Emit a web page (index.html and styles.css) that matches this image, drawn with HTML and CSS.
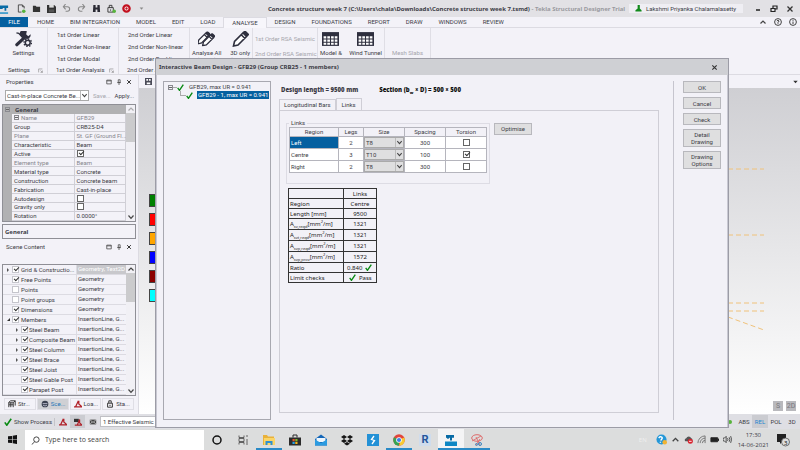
FILE: index.html
```html
<!DOCTYPE html>
<html lang="en">
<head>
<meta charset="UTF-8">
<meta name="viewport" content="width=device-width, initial-scale=1.0">
<title>Tekla Structural Designer</title>
<link rel="stylesheet" href="styles.css">
</head>
<body>
<svg width="0" height="0" class="defs">
  <symbol id="tick" viewBox="0 0 10 10"><path d="M1 5.500 3.500 9 9 1" fill="none" stroke="#0a8a14" stroke-width="2"/></symbol>
  <symbol id="pencil" viewBox="0 0 16 16"><path d="M1 15l1-4.500L10.500 2l3.500 3.500L5.500 14zM9 4l3.500 3.500M11.500 1l1-.8 3.300 3.300-1 1z" fill="#fff" stroke="#2e2f3e" stroke-width="1.600"/></symbol>
  <symbol id="grid" viewBox="0 0 16 13"><path d="M0 0h16v13H0z" fill="#2e2f3e"/><path d="M1.500 4h2.500v2H1.500zM5 4h2.500v2H5zM8.500 4H11v2H8.500zM12 4h2.500v2H12zM1.500 7h2.500v2H1.500zM5 7h2.500v2H5zM8.500 7H11v2H8.500zM12 7h2.500v2H12zM1.500 10h2.500v2H1.500zM5 10h2.500v2H5zM8.500 10H11v2H8.500zM12 10h2.500v2H12z" fill="#fff"/></symbol>
  <symbol id="close" viewBox="0 0 8 8"><path d="M1.500 1.500l5 5m0-5l-5 5" stroke="#333" stroke-width="1.300"/></symbol>
  <symbol id="box" viewBox="0 0 8 8"><path d="M1 1.500h6v5H1zM1 2.500h6" fill="none" stroke="#444"/></symbol>
  <symbol id="pin" viewBox="0 0 8 8"><path d="M3 1h2.500v3.500H3zM1.500 4.800h5M4 5v3" fill="none" stroke="#444"/></symbol>
  <symbol id="up" viewBox="0 0 8 8"><path d="M1.500 5.500 4 3l2.500 2.500" fill="none" stroke="#444" stroke-width="1.200"/></symbol>
  <symbol id="down" viewBox="0 0 8 8"><path d="M1.500 2.500 4 5.300l2.500-2.800" fill="none" stroke="#444" stroke-width="1.200"/></symbol>
  <symbol id="launch" viewBox="0 0 8 8"><path d="M1 7V1.500h6M4 4l3 3M7 4v3H4" fill="none" stroke="#888"/></symbol>
  <symbol id="load" viewBox="0 0 10 10"><path d="M0 8.500h10L6 5V1M5.500 1 2 8.500" fill="none" stroke="#b02028" stroke-width="1.600"/></symbol>
</svg>

<div class="app">
  <header class="titlebar">
    <div class="quick">
      <svg class="logo" viewBox="0 0 10 12"><path d="M0 10.500h9" stroke="#0f87c4" stroke-width="1.500"/><path d="M0 2h9v3H7v3H5V5H3v1H0z" fill="#086ba5"/></svg>
      <svg viewBox="0 0 10 10"><path d="M6 1H1.500v8H5M6 1l2 2v2M6 1v2h2" fill="none" stroke="#444"/><circle cx="7.500" cy="8" r="2" fill="#57b33c"/></svg>
      <svg viewBox="0 0 10 10"><path d="M1 2h3l1 1h4v6H1z" fill="#333"/></svg>
      <svg viewBox="0 0 10 10"><path d="M0 1h8l2 2v7H0z" fill="#333"/><path d="M2.500 1h5v3h-5z" fill="#ddd"/><path d="M2 6h6v3H2z" fill="#555"/></svg>
      <svg viewBox="0 0 10 10"><path d="M2 3h4a2.500 2.500 0 010 5H4M4 0 1.500 3 4 6" fill="none" stroke="#888" stroke-width="1.200"/></svg>
      <svg viewBox="0 0 10 10"><path d="M8 3H4a2.500 2.500 0 000 5h2M6 0l2.500 3L6 6" fill="none" stroke="#888" stroke-width="1.200"/></svg>
      <svg viewBox="0 0 10 10"><path d="M1.500 1h2.500v3h2V1h2.500L9 9H6V6H4v3H1z" fill="#2b2b35"/></svg>
      <svg viewBox="0 0 10 10"><path d="M1 4h6v5H1zM2.500 4V1.500h3V4M4 6v1.500" fill="none" stroke="#333"/><circle cx="8" cy="8" r="2" fill="#57b33c"/></svg>
      <svg viewBox="0 0 10 10"><circle cx="5" cy="5" r="3.500" fill="#fff" stroke="#c2101e" stroke-width="2.500"/><circle cx="5" cy="5" r="1.300" fill="#c2101e"/></svg>
      <svg viewBox="0 0 10 10"><path d="M3 4h4L5 6.500z" fill="#888"/></svg>
    </div>
    <h1 class="doc-title">Concrete structure week 7 (C:\Users\chala\Downloads\Concrete structure week 7.tsmd) <span>- Tekla Structural Designer Trial</span></h1>
    <div class="user"><svg viewBox="0 0 8 8"><path d="M3 0h2.500v4L7.500 6v1.500H.5V6L3 4z" fill="#128a1c"/></svg>Lakshmi Priyanka Chalamalasetty</div>
    <div class="win">
      <svg viewBox="0 0 8 8"><path d="M2 5h4" stroke="#222" stroke-width="1.500"/></svg>
      <svg viewBox="0 0 8 8"><path d="M3 3V1h4v3H5M1 3.500h4v3H1z" fill="none" stroke="#222" stroke-width="1.200"/></svg>
      <svg><use href="#close"/></svg>
    </div>
  </header>

  <nav class="menu">
    <button class="file">FILE</button>
    <button>HOME</button>
    <button>BIM INTEGRATION</button>
    <button>MODEL</button>
    <button>EDIT</button>
    <button>LOAD</button>
    <button class="active">ANALYSE</button>
    <button>DESIGN</button>
    <button>FOUNDATIONS</button>
    <button>REPORT</button>
    <button>DRAW</button>
    <button>WINDOWS</button>
    <button>REVIEW</button>
    <div class="help">
      <svg><use href="#up"/></svg>
      <svg viewBox="0 0 8 8"><circle cx="4" cy="4" r="3.400" fill="none" stroke="#444"/><path d="M2.800 3q1.200-1.500 2.300 0L4 4.500V5.800" fill="none" stroke="#444"/></svg>
      <svg viewBox="0 0 8 8"><circle cx="4" cy="4" r="3.400" fill="none" stroke="#444"/><path d="M4 3.500V6M4 1.800v1" stroke="#444"/></svg>
    </div>
  </nav>

  <section class="ribbon">
    <div class="group g-settings">
      <div class="tools"><button class="tool"><svg viewBox="0 0 18 17"><path d="M2 14.500 10 7" stroke="#2e2f3e" stroke-width="3.500" stroke-linecap="round"/><path d="M12.500.5A4 4 0 108 6.500l3 1.500a4 4 0 005.500-4.500L14 5.500 11.800 3.500z" fill="#2e2f3e"/><path d="M1.500 2 4 2.500 8.500 7.500" fill="none" stroke="#2e2f3e" stroke-width="1.500"/><circle cx="13.500" cy="12.500" r="4" fill="none" stroke="#2e2f3e" stroke-width="1.500" stroke-dasharray="1.500 1.600"/><circle cx="13.500" cy="12.500" r="2.600" fill="#f3f2f8" stroke="#2e2f3e" stroke-width="1.600"/></svg>Settings</button></div>
      <footer>Settings <svg><use href="#launch"/></svg></footer>
    </div>
    <div class="group g-first">
      <div class="links"><button>1st Order Linear</button><button>1st Order Non-linear</button><button>1st Order Modal</button></div>
      <footer>1st Order Analysis <svg><use href="#launch"/></svg></footer>
    </div>
    <div class="group g-first">
      <div class="links"><button>2nd Order Linear</button><button>2nd Order Non-linear</button><button>2nd Order Buckling</button></div>
      <footer>2nd Order Analysis <svg><use href="#launch"/></svg></footer>
    </div>
    <div class="group g-static">
      <div class="tools">
        <button class="tool"><svg viewBox="0 0 18 16"><use href="#pencil" x="-1" width="14" height="14"/><use href="#pencil" x="4" y="2" width="14" height="14"/></svg>Analyse All<br>(Static)</button>
        <button class="tool"><svg><use href="#pencil"/></svg>3D only<br>(Static)</button>
      </div>
    </div>
    <div class="group g-rsa">
      <div class="links dim"><button disabled>1st Order RSA Seismic</button><button disabled>2nd Order RSA Seismic</button></div>
    </div>
    <div class="group g-model">
      <div class="tools">
        <button class="tool"><svg><use href="#grid"/></svg>Model &amp;<br>Results</button>
        <button class="tool"><svg><use href="#grid"/></svg>Wind Tunnel</button>
      </div>
    </div>
    <div class="group g-mesh"><button disabled>Mesh Slabs</button></div>
  </section>

  <main class="work">
    <aside class="side">
      <div class="panel-head"><h2>Properties</h2><svg><use href="#box"/></svg><svg><use href="#pin"/></svg><svg><use href="#close"/></svg></div>
      <div class="preset">
        <span class="combo"><select aria-label="Property set"><option>Cast-in-place Concrete Be...</option></select><svg><use href="#down"/></svg></span>
        <button disabled>Save...</button><button>Apply...</button>
      </div>
      <div class="props">
        <div class="cat"><i class="minus"></i>General</div>
        <div class="props-body">
          <table>
            <tr class="off"><td><i class="plus"></i>Name</td><td>GFB29</td></tr>
            <tr><td>Group</td><td>CRB25-D4</td></tr>
            <tr class="off"><td>Plane</td><td>St. GF (Ground Fl...</td></tr>
            <tr><td>Characteristic</td><td>Beam</td></tr>
            <tr><td><label for="p-active">Active</label></td><td><input type="checkbox" id="p-active" checked></td></tr>
            <tr class="off"><td>Element type</td><td>Beam</td></tr>
            <tr><td>Material type</td><td>Concrete</td></tr>
            <tr><td>Construction</td><td>Concrete beam</td></tr>
            <tr><td>Fabrication</td><td>Cast-in-place</td></tr>
            <tr><td><label for="p-auto">Autodesign</label></td><td><input type="checkbox" id="p-auto"></td></tr>
            <tr><td><label for="p-grav">Gravity only</label></td><td><input type="checkbox" id="p-grav"></td></tr>
            <tr><td>Rotation</td><td>0.0000°</td></tr>
          </table>
        </div>
        <div class="scroll"><svg class="faint"><use href="#up"/></svg><div class="thumb"></div><svg><use href="#down"/></svg></div>
      </div>
      <div class="hint">General</div>

      <div class="panel-head scene-head"><h2>Scene Content</h2><svg><use href="#box"/></svg><svg><use href="#pin"/></svg><svg><use href="#close"/></svg></div>
      <div class="scene">
        <ul>
          <li class="picked"><span><i class="arrow"></i><label><input type="checkbox" checked>Grid &amp; Constructio...</label></span><em>Geometry, Text2D</em></li>
          <li><span><i></i><label><input type="checkbox" checked>Free Points</label></span><em>Geometry</em></li>
          <li><span><i></i><label><input type="checkbox">Points</label></span><em>Geometry</em></li>
          <li><span><i></i><label><input type="checkbox">Point groups</label></span><em>Geometry</em></li>
          <li><span><i></i><label><input type="checkbox" checked>Dimensions</label></span><em>Geometry</em></li>
          <li><span><i class="arrow open"></i><label><input type="checkbox" checked>Members</label></span><em>InsertionLine, G...</em></li>
          <li class="sub"><span><i class="arrow"></i><label><input type="checkbox" checked>Steel Beam</label></span><em>InsertionLine, G...</em></li>
          <li class="sub"><span><i class="arrow"></i><label><input type="checkbox" checked>Composite Beam</label></span><em>InsertionLine, G...</em></li>
          <li class="sub"><span><i class="arrow"></i><label><input type="checkbox" checked>Steel Column</label></span><em>InsertionLine, G...</em></li>
          <li class="sub"><span><i class="arrow"></i><label><input type="checkbox" checked>Steel Brace</label></span><em>InsertionLine, G...</em></li>
          <li class="sub"><span><i></i><label><input type="checkbox" checked>Steel Joist</label></span><em>InsertionLine, G...</em></li>
          <li class="sub"><span><i></i><label><input type="checkbox" checked>Steel Gable Post</label></span><em>InsertionLine, G...</em></li>
          <li class="sub"><span><i></i><label><input type="checkbox" checked>Parapet Post</label></span><em>InsertionLine, G...</em></li>
        </ul>
        <div class="scroll"><svg><use href="#up"/></svg><div class="thumb"></div><svg><use href="#down"/></svg></div>
      </div>
      <div class="side-tabs">
        <button><svg viewBox="0 0 10 10"><path d="M1 9V3l2-2h6v6M1 3.500h5.500V9M3.500 3v6M6.500 3.500 9 1M1 6h5.500" fill="none" stroke="#333" stroke-width="1.200"/></svg>Str...</button>
        <button class="active"><svg viewBox="0 0 10 10"><circle cx="5" cy="5" r="4.200" fill="#3b4150"/><path d="M2 4.500h6M2.500 6.500l2.500 1 2.500-1" stroke="#ccd" fill="none"/></svg>Sce...</button>
        <button><svg><use href="#load"/></svg>Loa...</button>
        <button><svg viewBox="0 0 10 10"><path d="M2 4h6v5H2zM3.500 4V1h3v3M5 6v1.500" fill="none" stroke="#333" stroke-width="1.200"/></svg>Sta...</button>
      </div>
    </aside>

    <section class="view">
      <div class="view-tabs"><svg viewBox="0 0 8 8"><path d="M0 0h8v8H0z" fill="#4a4b58"/><path d="M1.500 1h2v2h-2zM4.500 1h2v2h-2zM2 5h4v2H2z" fill="#fff"/></svg><svg viewBox="0 0 8 8"><path d="M1.500 3h5L4 6z" fill="#333"/></svg></div>
      <div class="canvas">
        <div class="legend"><i class="green"></i><i class="red"></i><i class="orange"></i><i class="blue"></i><i class="maroon"></i><i class="cyan"></i></div>
        <svg class="lines" viewBox="0 0 72 325"><path d="M0 81h36M0 147h36M0 215h36M0 223h36M0 229l36 13" fill="none" stroke="#f0c27a" stroke-width="1" stroke-dasharray="5 3"/></svg>
        <div class="modes"><button>S</button><button>2D</button></div>
      </div>
    </section>
  </main>

  <div class="status">
    <button class="show"><svg><use href="#tick"/></svg>Show Process</button>
    <button class="ico"><svg><use href="#load"/></svg></button>
    <button class="ico on"><svg viewBox="0 0 10 10"><path d="M0 1h6v4H0z" fill="#333"/><path d="M1 9h9L7 6V2L4 9" fill="none" stroke="#b02028" stroke-width="1.500"/></svg></button>
    <button class="ico"><svg viewBox="0 0 10 10"><path d="M1 2h8v6H1z" fill="#444"/><path d="M1 2l4 3.500L9 2M1 8l3-3M9 8 6 5" stroke="#eee" fill="none" stroke-width=".8"/></svg></button>
    <select class="case" aria-label="Load case"><option>1 Effective Seismic Weight</option></select>
    <div class="coords"><b></b><button>ABS</button><button class="on">REL</button><button>POL</button><button>3D</button></div>
  </div>

  <footer class="taskbar">
    <button class="start"><svg viewBox="0 0 10 10"><path d="M0 1.500 4.500 1v3.700H0zM5.200.9 10 0v4.700H5.200zM0 5.300h4.500V9L0 8.500zM5.200 5.300H10V10l-4.800-.8z" fill="#111"/></svg></button>
    <label class="search"><svg viewBox="0 0 10 10"><circle cx="6" cy="4" r="3" fill="none" stroke="#333"/><path d="M4 6.500.8 9.500" stroke="#333"/></svg><input type="text" placeholder="Type here to search"></label>
    <div class="apps">
      <button><svg viewBox="0 0 12 12"><circle cx="6" cy="6" r="4" fill="none" stroke="#111" stroke-width="1.500"/></svg></button>
      <button><svg viewBox="0 0 12 12"><path d="M2 1.500v2h5v-2M2 10.500v-2h5v2M2 4.500h5v3H2zM10 1v2M10 5v6" fill="none" stroke="#444" stroke-width=".8"/></svg></button>
      <button class="run"><svg viewBox="0 0 12 12"><path d="M0 1h4l1 1.500h6V11H0z" fill="#e9b13a"/><path d="M1 4h11v7H1z" fill="#fbd567"/><path d="M2.500 11V7h7v4H7.500V9h-3v2z" fill="#2f8fd0"/></svg></button>
      <button><svg viewBox="0 0 12 12"><path d="M0 3.500h12v8H0z" fill="#2b2b2b"/><path d="M4 3.500V1h4v2.500" fill="none" stroke="#2b2b2b"/><path d="M3.500 5h2.200v2.200H3.500z" fill="#e8512c"/><path d="M6.300 5h2.200v2.200H6.300z" fill="#7fba2a"/><path d="M3.500 7.800h2.200V10H3.500z" fill="#28a4e8"/><path d="M6.300 7.800h2.200V10H6.300z" fill="#f8b71c"/></svg></button>
      <button><svg viewBox="0 0 12 12"><path d="M0 5l6-4.500L12 5v6.500H0z" fill="#1466b8"/><path d="M1.500 4h9v4h-9z" fill="#eef6fc"/><path d="M0 5.500 6 9l6-3.500v6H0z" fill="#2c9be0"/></svg></button>
      <button><svg viewBox="0 0 12 12"><path d="M3 1 6 3 3 5 0 3zM9 1l3 2-3 2-3-2zM3 5l3 2-3 2-3-2zM9 5l3 2-3 2-3-2zM6 8l3 1.800L6 11.500 3 9.800z" fill="#151515"/></svg></button>
      <button><svg viewBox="0 0 12 12"><path d="M0 0h12v12H0z" fill="#2391d6"/><path d="M7 2 4.500 5.500 7.500 6.500 5 10" fill="none" stroke="#fff" stroke-width="1.300"/></svg></button>
      <button class="run"><svg viewBox="0 0 12 12"><circle cx="6" cy="6" r="5.800" fill="#e2453a"/><path d="M6 6 1 3.200A5.800 5.800 0 006 11.800z" fill="#35a354"/><path d="M6 6 11.200 3.500A5.800 5.800 0 016 11.800L8 6z" fill="#f9cb31"/><circle cx="6" cy="6" r="2.800" fill="#fff"/><circle cx="6" cy="6" r="2.100" fill="#3c7fe8"/></svg></button>
      <button><span class="revit">R</span></button>
      <button class="run current"><svg viewBox="0 0 12 12"><path d="M0 7.500h12V12H0z" fill="#0f87c4"/><path d="M1 1h8v2.700H7V6.500H5V3.500L3 5 1 3.500z" fill="#086ba5"/></svg></button>
      <button class="run"><svg viewBox="0 0 12 12"><ellipse cx="6" cy="4" rx="5.300" ry="3.300" fill="none" stroke="#dd6a6a"/><path d="M1 7l9-5M5 3l4 8M9 5l-4 6" stroke="#dd6a6a" fill="none" stroke-width=".9"/><circle cx="9" cy="10" r="1.500" fill="none" stroke="#3a86c0"/><circle cx="5.500" cy="10.500" r="1" fill="none" stroke="#3a86c0"/></svg></button>
    </div>
    <div class="tray">
      <span class="lang">EN</span>
      <svg class="big" viewBox="0 0 12 12"><circle cx="6" cy="6" r="5.500" fill="#2497d8"/><path d="M3 4.500q1.500-2.500 3.500-1Q7.500 5 5 7M4.800 8.500v1" stroke="#fff" stroke-width="1.500" fill="none"/><circle cx="9.500" cy="9" r="2.500" fill="#f1b332"/></svg>
      <svg><use href="#up"/></svg>
      <svg viewBox="0 0 10 10"><path d="M1.500 7a2 2 0 011-3.500 3 3 0 015.500 0Q10 4 9 7z" fill="#555"/><circle cx="7" cy="7" r="2.800" fill="#d9232e"/><path d="M5.500 7h3" stroke="#fff"/></svg>
      <svg viewBox="0 0 10 10"><path d="M1 9A8 8 0 019 1M3.500 9A5.500 5.500 0 019 3.500M6 9a3 3 0 013-3M9 1v8" fill="none" stroke="#666" stroke-width=".9"/></svg>
      <svg viewBox="0 0 10 10"><path d="M1 3h7.500v4.500H1zM9 4.500h1v1.500H9z" fill="#222" stroke="#222"/></svg>
      <svg viewBox="0 0 10 10"><path d="M0 3.500h1.500l2-2v7l-2-2H0zM5 3.500q1 1.500 0 3M6.800 2.500q1.700 2.500 0 5M8.500 1.200q2 3.500 0 7.600" fill="none" stroke="#333" stroke-width=".9"/></svg>
      <time>17:30<br>14-06-2021</time>
      <svg class="note" viewBox="0 0 14 14"><path d="M1 1h9v8H6l-2 2V9H1z" fill="#222"/><circle cx="9.500" cy="9" r="4" fill="#ddd" stroke="#555" stroke-width=".8"/><text x="8" y="11.500">3</text></svg>
    </div>
  </footer>

  <div class="dialog" role="dialog" aria-label="Interactive Beam Design">
    <header><h2>Interactive Beam Design - GFB29 (Group CRB25 - 1 members)</h2><button aria-label="Close"><svg><use href="#close"/></svg></button></header>
    <div class="dialog-body">
      <div class="members">
        <div class="node"><i class="minus"></i><i class="dash"></i><svg><use href="#tick"/></svg><span>GFB29, max UR = 0.941</span></div>
        <div class="node child"><i class="elbow"></i><svg><use href="#tick"/></svg><span class="sel">GFB29 - 1, max UR = 0.941</span></div>
      </div>

      <div class="design">
        <div class="facts"><b>Design length = 9500 mm</b><b class="dark">Section (b<sub>w</sub> × D) = 500 × 500</b></div>
        <div class="tabs"><button>Longitudinal Bars</button><button class="active">Links</button></div>
        <div class="page">
          <div class="row">
            <fieldset>
              <legend>Links</legend>
              <table class="bars">
                <tr><th class="c-region">Region</th><th class="c-legs">Legs</th><th class="c-wide">Size</th><th class="c-wide">Spacing</th><th class="c-wide">Torsion</th></tr>
                <tr><td class="region sel">Left</td><td>2</td><td class="size"><span class="combo"><select aria-label="Left size"><option>T8</option></select><svg><use href="#down"/></svg></span></td><td>300</td><td><input type="checkbox" aria-label="Left torsion"></td></tr>
                <tr><td class="region">Centre</td><td>3</td><td class="size"><span class="combo"><select aria-label="Centre size"><option>T10</option></select><svg><use href="#down"/></svg></span></td><td>100</td><td><input type="checkbox" aria-label="Centre torsion" checked></td></tr>
                <tr><td class="region">Right</td><td>2</td><td class="size"><span class="combo"><select aria-label="Right size"><option>T8</option></select><svg><use href="#down"/></svg></span></td><td>300</td><td><input type="checkbox" aria-label="Right torsion"></td></tr>
              </table>
            </fieldset>
            <button class="btn">Optimise</button>
          </div>
          <table class="results">
            <tr><td></td><td>Links</td></tr>
            <tr><td>Region</td><td>Centre</td></tr>
            <tr><td>Length [mm]</td><td>9500</td></tr>
            <tr class="tall"><td>A<sub>sv,reqd</sub>[mm<sup>2</sup>/m]</td><td>1321</td></tr>
            <tr class="tall"><td>A<sub>svt,reqd</sub>[mm<sup>2</sup>/m]</td><td>1321</td></tr>
            <tr class="tall"><td>A<sub>svp,reqd</sub>[mm<sup>2</sup>/m]</td><td>1321</td></tr>
            <tr class="tall"><td>A<sub>svp,prov</sub>[mm<sup>2</sup>/m]</td><td>1572</td></tr>
            <tr><td>Ratio</td><td>0.840 <svg><use href="#tick"/></svg></td></tr>
            <tr><td>Limit checks</td><td><svg><use href="#tick"/></svg> Pass</td></tr>
          </table>
        </div>
      </div>

      <div class="actions">
        <button class="btn ok">OK</button>
        <button class="btn">Cancel</button>
        <button class="btn">Check</button>
        <button class="btn">Detail<br>Drawing</button>
        <button class="btn">Drawing<br>Options</button>
      </div>
    </div>
  </div>
</div>
</body>
</html>
```
FILE: styles.css
```css
* {
  box-sizing: border-box;
}

body {
  margin: 0;
  font-family: Roboto, "Liberation Sans", sans-serif;
  font-size: 6px;
  line-height: 8px;
  color: #3c3c46;
  background: #f3f2f8;
}

h1, h2, ul, fieldset {
  margin: 0;
  padding: 0;
  font-size: 6px;
  font-weight: normal;
}

button, input, select {
  font: inherit;
  color: inherit;
  margin: 0;
  padding: 0;
  border: 0;
  background: none;
}

svg {
  display: block;
  flex: none;
  width: 8px;
  height: 8px;
}

i, em {
  font-style: normal;
}

.defs {
  position: absolute;
  width: 0;
  height: 0;
}

select {
  appearance: none;
}

input[type="checkbox"] {
  appearance: none;
  display: block;
  position: relative;
  flex: none;
  width: 7px;
  height: 7px;
  border: 1px solid #666;
  background: #fff;
}

input[type="checkbox"]:checked::after {
  content: "";
  position: absolute;
  left: 1px;
  top: 0;
  width: 4px;
  height: 2px;
  border-left: 1px solid #333;
  border-bottom: 1px solid #333;
  transform: rotate(-45deg);
}

.app {
  position: relative;
  display: flex;
  flex-direction: column;
  height: 100vh;
  overflow: hidden;
}

/* Title bar */
.titlebar {
  display: flex;
  align-items: center;
  height: 17px;
  background: #e2e1e5;
}

.quick {
  display: flex;
  align-items: center;
  gap: 6px;
  flex: none;
  width: 268px;
}

.quick svg {
  width: 9px;
  height: 9px;
}

.quick .logo {
  margin-right: 2px;
  height: 12px;
}

.doc-title,
.dialog h2,
.facts,
.cat,
.hint {
  font-family: "Noto Sans", sans-serif;
  font-weight: bold;
}

.doc-title {
  flex: 1;
  min-width: 0;
  white-space: nowrap;
}

.doc-title span {
  color: #9a9aa0;
}

.user {
  display: flex;
  align-items: center;
  gap: 4px;
  flex: none;
  width: 114px;
  height: 9px;
  padding-left: 6px;
  background: #efeef3;
  white-space: nowrap;
}

.user svg {
  width: 7px;
  height: 7px;
}

.win {
  display: flex;
  gap: 8px;
  padding: 0 6px 0 11px;
}

/* Menu */
.menu {
  display: flex;
  height: 11px;
  border-bottom: 1px solid #dcdbe2;
}

.menu button {
  padding: 0 8px;
}

.menu .file {
  width: 28px;
  margin-right: 1px;
  background: #0560a0;
  color: #fff;
}

.menu .active {
  height: 11px;
  border: 1px solid #dcdbe2;
  border-bottom: 0;
  background: #f7f6fb;
}

.help {
  display: flex;
  align-items: center;
  gap: 7px;
  margin-left: auto;
  padding-right: 3px;
}

/* Ribbon */
.ribbon {
  display: flex;
  height: 47px;
  border-bottom: 1px solid #dcdbe2;
}

.group {
  display: flex;
  flex-direction: column;
  justify-content: space-between;
  padding: 3px 4px 0;
  border-right: 1px solid #dfdee5;
  white-space: nowrap;
}

.group footer {
  display: flex;
  align-items: center;
  justify-content: space-between;
  padding-left: 4px;
}

.group footer svg {
  width: 5px;
  height: 5px;
}

.g-settings { width: 48px; }
.g-first { width: 71px; }
.g-static { width: 63px; }
.g-rsa { width: 65px; }
.g-model { width: 67px; }
.g-mesh {
  width: 46px;
  justify-content: center;
  color: #a5a5ac;
}

.tools {
  display: flex;
  justify-content: space-around;
}

.g-model,
.g-static {
  padding: 3px 2px 0;
}

.g-model .tools,
.g-static .tools {
  justify-content: space-between;
}

.tool {
  display: flex;
  flex-direction: column;
  align-items: center;
  gap: 2px;
  line-height: 7px;
}

.tool svg {
  width: 17px;
  height: 16px;
}

.links {
  display: flex;
  flex-direction: column;
  align-items: flex-start;
  gap: 4px;
  padding-left: 5px;
}

.g-rsa {
  padding: 3px 2px 0;
}

.links.dim {
  gap: 7px;
  padding: 4px 0 0;
  color: #a5a5ac;
}

/* Left side */
.work {
  display: flex;
  flex: 1;
  min-height: 0;
}

.side {
  width: 139px;
  padding: 3px 2px 0;
  border-right: 1px solid #dcdbe2;
  white-space: nowrap;
}

.panel-head {
  display: flex;
  align-items: center;
  gap: 4px;
  padding: 0 4px;
}

.panel-head h2 {
  flex: 1;
}

.panel-head svg {
  width: 6px;
  height: 6px;
}

.preset {
  display: flex;
  align-items: center;
  gap: 4px;
  padding: 4px 3px 3px;
}

.preset button:disabled {
  color: #a5a5ac;
}

.combo {
  display: flex;
  align-items: center;
  border: 1px solid #aaa;
}

.combo select {
  flex: 1;
  min-width: 0;
  height: 100%;
  padding-left: 1px;
}

.combo svg {
  border-left: 1px solid #bbb;
}

.preset .combo {
  width: 84px;
  height: 11px;
  background: #fff;
}

.preset .combo svg {
  height: 9px;
}

.props {
  display: grid;
  grid-template-columns: 1fr 9px;
  height: 118px;
  border: 1px solid #8f8f96;
}

.cat {
  display: flex;
  align-items: center;
  gap: 5px;
  height: 9px;
  padding-left: 2px;
  background: #b1b1b3;
}

.minus, .plus {
  flex: none;
  width: 5px;
  height: 5px;
  border: 1px solid #8a8a90;
  background: linear-gradient(#666, #666) center / 3px 1px no-repeat;
}

.props-body {
  grid-row: 2;
  border-left: 9px solid #b1b1b3;
}

.props table {
  width: 100%;
  height: 107px;
  border-collapse: collapse;
  table-layout: fixed;
}

.props td {
  padding: 0 0 0 2px;
  border-right: 1px solid #d0cfd6;
  border-bottom: 1px solid #d0cfd6;
  line-height: 7px;
}

.props td:first-child {
  width: 62px;
}

.props .off {
  color: #85858c;
}

.plus {
  display: inline-block;
  margin-right: 2px;
}

.scroll {
  display: flex;
  flex-direction: column;
  align-items: center;
  background: #f1f0f5;
}

.props .scroll {
  grid-row: 1 / 3;
  grid-column: 2;
}

.scroll .thumb {
  width: 9px;
  height: 29px;
  margin-bottom: auto;
  background: #cbcbcd;
}

.faint {
  opacity: .4;
}

.hint {
  height: 15px;
  margin-top: 2px;
  padding: 3px 2px;
  border: 1px solid #8f8f96;
}

.scene-head {
  margin-top: 4px;
}

.scene {
  display: grid;
  grid-template-columns: 1fr 9px;
  margin-top: 13px;
  height: 132px;
  border: 1px solid #8f8f96;
}

.scene ul {
  list-style: none;
}

.scene li {
  display: flex;
  height: 10px;
  border-bottom: 1px solid #dcdbe2;
}

.scene li > span {
  display: flex;
  align-items: center;
  width: 74px;
  border-right: 1px solid #dcdbe2;
}

.scene li.sub > span {
  padding-left: 9px;
}

.scene label {
  display: flex;
  align-items: center;
  gap: 2px;
}

.scene .sub label {
  gap: 1px;
}

.scene i {
  width: 9px;
  flex: none;
}

.arrow::before {
  content: "";
  display: block;
  width: 0;
  margin-left: 4px;
  border: 2px solid transparent;
  border-left-color: #555;
  border-right: 0;
}

.arrow.open::before {
  border: 0;
  border-left: 3px solid transparent;
  border-bottom: 3px solid #333;
}

.scene input[type="checkbox"] {
  border-color: #c5c5cc;
}

.scene em {
  flex: 1;
  padding-left: 1px;
}

.scene .picked em {
  background: #c8c8cc;
  color: #fff;
}

.side-tabs {
  display: flex;
  gap: 1px;
  padding: 2px;
}

.side-tabs button {
  display: flex;
  align-items: center;
  gap: 2px;
  width: 32px;
  height: 12px;
  padding-left: 3px;
  border: 1px solid #dfdee5;
}

.side-tabs .active {
  background: #cfd0d4;
  color: #1b76b8;
}

/* Model view */
.view {
  display: flex;
  flex-direction: column;
  flex: 1;
}

.view-tabs {
  display: flex;
  align-items: center;
  justify-content: space-between;
  height: 13px;
  padding: 0 1px 0 6px;
}

.view-tabs svg {
  width: 7px;
  height: 7px;
}

.canvas {
  position: relative;
  flex: 1;
  background: linear-gradient(#cfcfd3, #fff);
}

.legend {
  position: absolute;
  left: 10px;
  top: 106px;
  display: flex;
  flex-direction: column;
  gap: 6px;
}

.legend i {
  width: 14px;
  height: 13px;
  border: 1px solid #444;
}

.green { background: #008000; }
.red { background: #f00; }
.orange { background: #ffa500; }
.blue { background: #00f; }
.maroon { background: #8b0000; }
.cyan { background: #0ff; }

.lines {
  position: absolute;
  right: 0;
  top: 0;
  width: 72px;
  height: 325px;
}

.modes {
  position: absolute;
  right: 4px;
  bottom: 3px;
  display: flex;
  gap: 3px;
}

.modes button {
  width: 10px;
  height: 10px;
  background: #b9b9bd;
  color: #77777c;
  font-size: 7px;
}

/* Status bar */
.status {
  display: flex;
  align-items: center;
  height: 15px;
  background: #dfdfe4;
}

.show {
  display: flex;
  gap: 2px;
  width: 55px;
  padding-left: 4px;
  border-right: 1px solid #c4c4c9;
  white-space: nowrap;
}

.status .ico {
  display: flex;
  align-items: center;
  justify-content: center;
  width: 15px;
  height: 13px;
}

.status .on {
  background: #cbccd1;
}

.case {
  width: 100px;
  height: 11px;
  padding-left: 2px;
  border: 1px solid #c0c0c5;
  background: #fff;
}

.coords {
  display: flex;
  align-items: center;
  margin-left: auto;
}

.coords b {
  width: 4px;
  height: 4px;
  margin-right: 4px;
  border-radius: 50%;
  background: #57b33c;
}

.coords button {
  width: 16px;
  height: 13px;
}

.coords .on {
  color: #1b86d0;
}

/* Taskbar */
.taskbar {
  display: flex;
  height: 21px;
  background: #dcdddd;
  font-family: "Open Sans", sans-serif;
}

.start {
  display: flex;
  align-items: center;
  justify-content: center;
  width: 25px;
}

.start svg {
  width: 9px;
  height: 9px;
}

.search {
  display: flex;
  align-items: center;
  gap: 5px;
  width: 179px;
  margin-top: 1px;
  padding-left: 6px;
  background: #fff;
}

.search svg {
  width: 9px;
  height: 9px;
}

.search input {
  flex: 1;
  font-size: 7px;
}

.search input::placeholder {
  color: #444;
}

.apps {
  display: flex;
}

.apps button {
  display: flex;
  align-items: center;
  justify-content: center;
  width: 26px;
  border: 0 solid #2a8ac6;
}

.apps svg {
  width: 12px;
  height: 12px;
}

.apps .run {
  border-bottom: 2px solid #2a8ac6;
  padding-top: 2px;
}

.apps .current {
  background: #f4f4f5;
}

.revit {
  width: 12px;
  background: #cfdcec;
  font-family: Roboto, sans-serif;
  font-size: 11px;
  line-height: 12px;
  font-weight: bold;
  color: #24569a;
}

.tray {
  display: flex;
  align-items: center;
  gap: 4px;
  margin-left: auto;
  padding-right: 10px;
}

.tray svg {
  width: 9px;
  height: 9px;
}

.tray .big {
  width: 11px;
  height: 11px;
}

.lang {
  padding-right: 5px;
  color: #efefef;
}

.tray time {
  padding: 0 3px 0 2px;
  text-align: center;
  line-height: 10px;
}

.tray .note {
  width: 14px;
  height: 14px;
}

.note text {
  font-size: 6px;
}

/* Beam design window, floats over the workspace */
.dialog {
  position: absolute;
  left: 155px;
  right: 71px;
  top: 58px;
  bottom: 22px;
  display: flex;
  flex-direction: column;
  border: 1px solid #9c9ca6;
  background: #f2f1f7;
  box-shadow: inset -1px 0 #c8c8d2, inset 1px 0 #c8c8d2;
}

.dialog > header {
  display: flex;
  align-items: center;
  justify-content: space-between;
  height: 16px;
  padding: 0 10px 0 3px;
  background: #cfd0d4;
}

.dialog > header svg {
  width: 7px;
  height: 7px;
}

.dialog-body {
  display: flex;
  flex: 1;
  min-height: 0;
  padding: 6px 7px 7px;
}

.members {
  width: 108px;
  border: 1px solid #a8a8b0;
  padding: 1px 0 0 4px;
  white-space: nowrap;
  overflow: hidden;
}

.node {
  display: flex;
  align-items: center;
  height: 8px;
}

.node svg {
  width: 7px;
  height: 7px;
}

.node span {
  margin-left: 4px;
  padding: 0 1px;
}

.dash {
  width: 4px;
  border-top: 1px solid #aaa;
}

.elbow {
  width: 6px;
  height: 5px;
  margin: 0 0 4px 12px;
  border-left: 1px solid #aaa;
  border-bottom: 1px solid #aaa;
}

.node .sel {
  background: #0560a0;
  color: #fff;
}

.design {
  display: flex;
  flex-direction: column;
  flex: 1;
  margin: 0 14px 7px 8px;
}

.facts {
  display: flex;
  gap: 21px;
  height: 17px;
  padding: 5px 2px 0;
}

.dark {
  color: #111;
}

sub, sup {
  font-size: 4px;
  line-height: 0;
}

.tabs {
  display: flex;
  align-items: flex-end;
}

.tabs button {
  height: 11px;
  padding: 0 4px;
  border: 1px solid #cfced6;
  border-bottom: 0;
}

.tabs .active {
  height: 13px;
  padding: 0 5px;
  background: #f2f1f7;
  margin-bottom: -1px;
}

.page {
  flex: 1;
  padding: 8px 6px;
  border: 1px solid #cfced6;
}

.row {
  display: flex;
  align-items: flex-start;
  gap: 4px;
}

fieldset {
  width: 203px;
  padding: 0 2px 10px;
  border: 1px solid #dddce4;
}

legend {
  padding: 0 2px;
}

.bars {
  width: 100%;
  border-collapse: collapse;
  table-layout: fixed;
  text-align: center;
}

.bars th {
  height: 9px;
  padding: 0;
  border: 1px solid #b5b5bd;
  font-weight: normal;
}

.c-region { width: 49px; }
.c-legs { width: 25px; }
.c-wide { width: 41px; }

.bars td {
  height: 11px;
  padding: 0;
  border: 1px solid #b5b5bd;
  background: #fff;
}

.bars .region {
  padding-left: 1px;
  text-align: left;
}

.bars .region.sel {
  background: #0560a0;
  color: #fff;
}

.bars .combo {
  height: 11px;
  background: #dfdfe0;
}

.bars .combo svg {
  height: 9px;
}

.bars input {
  margin: 0 auto;
}

.btn {
  height: 12px;
  border: 1px solid #b8b8bd;
  background: #dfdfe0;
}

.row .btn {
  width: 38px;
  margin-top: 4px;
}

.results {
  margin: 4px 0 0 2px;
  border-collapse: collapse;
  font-family: "Noto Sans", sans-serif;
  color: #222;
  white-space: nowrap;
}

.results td {
  width: 33px;
  height: 10px;
  padding: 0 1px;
  border: 1px solid #333;
  text-align: center;
}

.results td:first-child {
  width: 55px;
  text-align: left;
}

.results .tall td {
  height: 11px;
}

.results svg {
  display: inline-block;
  width: 7px;
  height: 7px;
  margin: 0 1px;
  vertical-align: -1px;
}

.actions {
  display: flex;
  flex-direction: column;
  gap: 4px;
  width: 48px;
  padding-left: 9px;
  border-left: 1px solid #c6c5ce;
}

.actions .btn {
  min-height: 12px;
  height: auto;
  line-height: 7px;
  padding: 1px 0;
}
```
